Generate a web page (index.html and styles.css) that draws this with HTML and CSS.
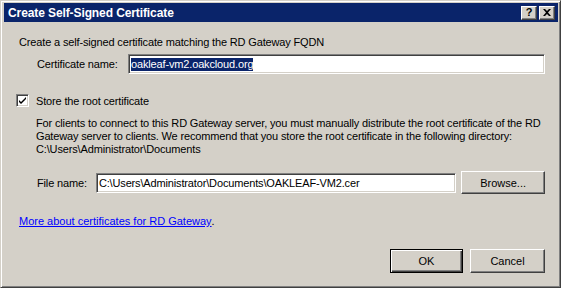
FILE: index.html
```html
<!DOCTYPE html>
<html lang="en">
<head>
    <meta charset="UTF-8">
    <title>Create Self-Signed Certificate</title>
    <link rel="stylesheet" href="styles.css">
</head>
<body>

    <div class="janela">
        <div class="titulo">
            <span class="titulo-texto">Create Self-Signed Certificate</span>
            <div class="titulo-botoes">
                <span class="btn-mini">?</span>
                <span class="btn-mini">
                    <svg width="8" height="7" viewBox="0 0 8 7"><path d="M0 0h2l2 2 2-2h2L5 3.5 8 7H6L4 5 2 7H0l3-3.5z" fill="#000"/></svg>
                </span>
            </div>
        </div>

        <div class="conteudo">
            <p class="intro">Create a self-signed certificate matching the RD Gateway FQDN</p>

            <div class="linha linha-cert">
                <span class="rotulo">Certificate name:</span>
                <div class="campo campo-cert"><span class="selecionado">oakleaf-vm2.oakcloud.org</span></div>
            </div>

            <div class="linha linha-check">
                <span class="caixa">
                    <svg width="9" height="8" viewBox="0 0 9 8"><path d="M1 3l2 2 5-5v2L3 7 1 5z" fill="#000"/></svg>
                </span>
                <span>Store the root certificate</span>
            </div>

            <p class="explica">For clients to connect to this RD Gateway server, you must manually distribute the root certificate of the RD<br>Gateway server to clients. We recommend that you store the root certificate in the following directory:<br>C:\Users\Administrator\Documents</p>

            <div class="linha linha-arquivo">
                <span class="rotulo">File name:</span>
                <div class="campo campo-arquivo">C:\Users\Administrator\Documents\OAKLEAF-VM2.cer</div>
                <button class="botao botao-browse">Browse...</button>
            </div>

            <p class="mais"><a href="#">More about certificates for RD Gateway</a>.</p>

            <div class="rodape">
                <button class="botao botao-ok">OK</button>
                <button class="botao botao-cancel">Cancel</button>
            </div>
        </div>
    </div>

</body>
</html>
```

FILE: styles.css
```css
body {
    margin: 0;
    font-family: "Liberation Sans", Arial, sans-serif;
    font-size: 11px;
    letter-spacing: -0.15px;
    color: #000;
    background: #fff;
}

.janela {
    width: 561px;
    height: 288px;
    box-sizing: border-box;
    background: #d4d0c8;
    border: 1px solid;
    border-color: #d4d0c8 #404040 #404040 #d4d0c8;
    box-shadow: inset 1px 1px #fff, inset -1px -1px #808080;
    padding: 2px 2px 3px 3px;
    display: flex;
    flex-direction: column;
}

.titulo {
    height: 19px;
    background: #0a246a;
    display: flex;
    align-items: center;
    justify-content: space-between;
    padding: 0 3px 0 4px;
}

.titulo-texto {
    color: #fff;
    font-weight: bold;
    font-size: 12px;
    letter-spacing: -0.1px;
}

.titulo-botoes {
    display: flex;
    gap: 2px;
}

.btn-mini {
    width: 16px;
    height: 14px;
    box-sizing: border-box;
    background: #d4d0c8;
    border: 1px solid;
    border-color: #fff #404040 #404040 #fff;
    box-shadow: inset -1px -1px #808080;
    display: flex;
    align-items: center;
    justify-content: center;
    font-weight: bold;
    font-size: 11px;
    line-height: 1;
}

.conteudo {
    flex: 1;
    padding: 0 13px 0 15px;
    display: flex;
    flex-direction: column;
}

.intro {
    margin: 14px 0 0 0;
    line-height: 13px;
}

.linha {
    display: flex;
    align-items: center;
}

.linha-cert {
    margin-top: 5px;
    padding-left: 18px;
}

.linha-cert .rotulo {
    width: 91px;
}

.campo {
    height: 20px;
    box-sizing: border-box;
    background: #fff;
    border: 1px solid;
    border-color: #808080 #fff #fff #808080;
    box-shadow: inset 1px 1px #404040, inset -1px -1px #d4d0c8;
    padding: 0 2px;
    display: flex;
    align-items: center;
    white-space: nowrap;
}

.campo-cert {
    flex: 1;
}

.selecionado {
    background: #0a246a;
    color: #fff;
    padding-bottom: 1px;
}

.linha-check {
    margin-top: 20px;
    gap: 7px;
}

.caixa {
    width: 13px;
    height: 13px;
    box-sizing: border-box;
    margin-left: -3px;
    background: #fff;
    border: 1px solid;
    border-color: #808080 #fff #fff #808080;
    box-shadow: inset 1px 1px #404040, inset -1px -1px #d4d0c8;
    display: flex;
    align-items: center;
    justify-content: center;
}

.explica {
    margin: 10px 0 0 17px;
    line-height: 13px;
    white-space: nowrap;
}

.linha-arquivo {
    margin-top: 15px;
    padding-left: 18px;
}

.linha-arquivo .rotulo {
    width: 59px;
}

.campo-arquivo {
    width: 361px;
}

.botao {
    font-family: "Liberation Sans", Arial, sans-serif;
    font-size: 11px;
    color: #000;
    background: #d4d0c8;
    box-sizing: border-box;
    border: 1px solid;
    border-color: #fff #404040 #404040 #fff;
    box-shadow: inset -1px -1px #808080;
    padding: 0;
}

.botao-browse {
    width: 84px;
    height: 23px;
    margin-left: 5px;
}

.mais {
    margin: 21px 0 0 0;
    line-height: 13px;
}

.mais a {
    color: #0000ff;
    letter-spacing: 0;
}

.rodape {
    margin-top: auto;
    margin-bottom: 11px;
    display: flex;
    justify-content: flex-end;
    gap: 7px;
}

.rodape .botao {
    height: 24px;
}

.rodape .botao-ok {
    width: 73px;
    border: 1px solid #000;
    box-shadow: inset 1px 1px #fff, inset -1px -1px #404040, inset -2px -2px #808080;
}

.rodape .botao-cancel {
    width: 75px;
}
```
